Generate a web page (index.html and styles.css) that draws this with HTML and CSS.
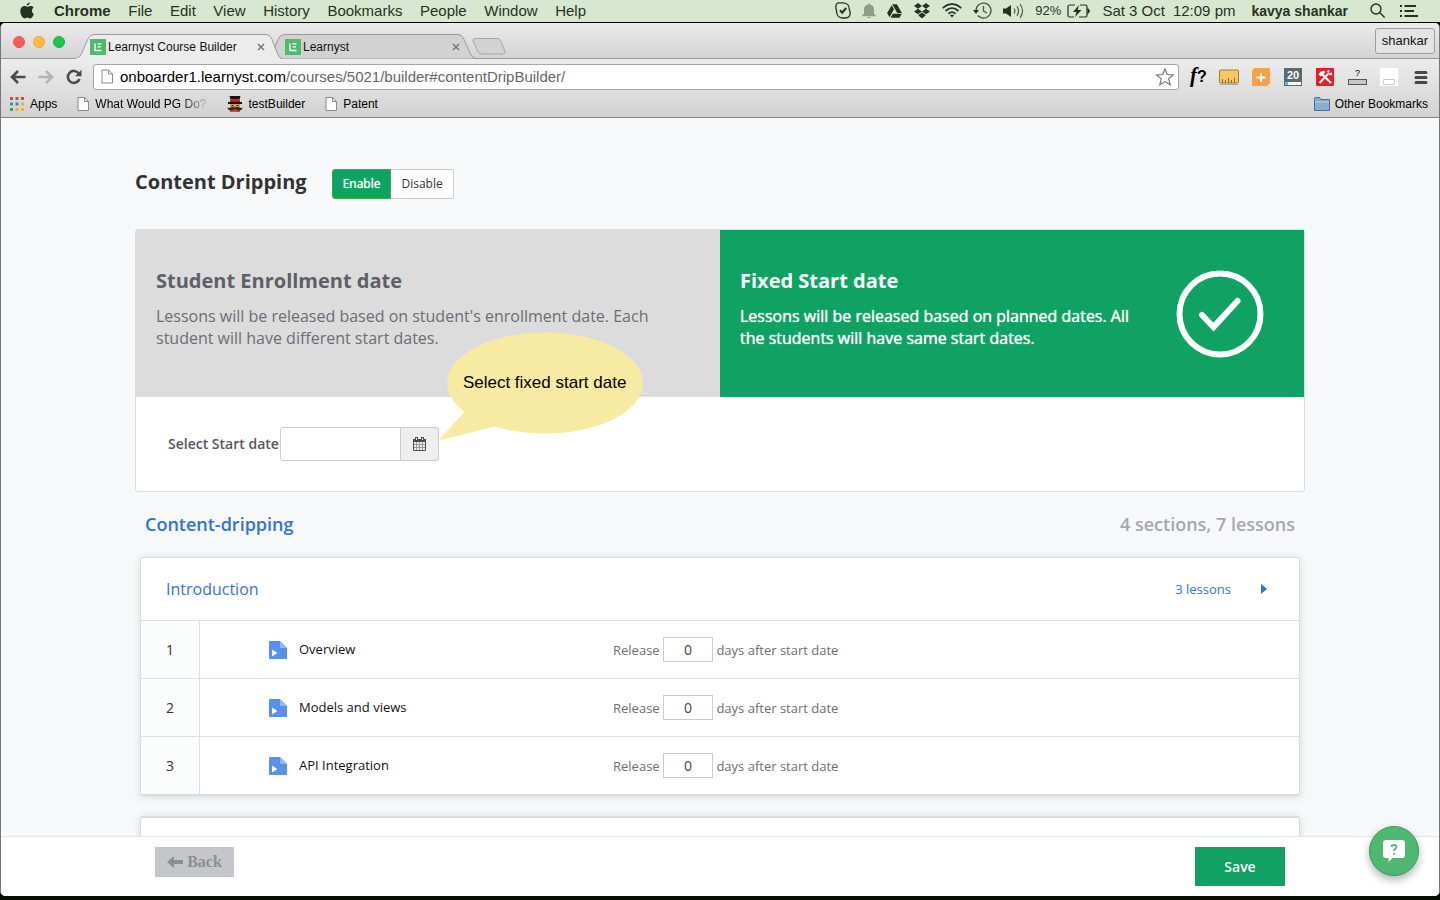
FILE: index.html
```html
<!DOCTYPE html>
<html lang="en">
<head>
<meta charset="utf-8">
<title>Learnyst Course Builder</title>
<link rel="stylesheet" href="styles.css">
</head>
<body>
<svg class="defs" aria-hidden="true">
  <symbol id="logo" viewBox="0 0 16 16"><rect width="16" height="16" fill="#4fb96f"/><path d="M5 4.500v7.000h6.500M7.500 4.800h4M7.500 7.900h3.500" stroke="#fff" stroke-width="1.300" fill="none"/></symbol>
  <symbol id="page" viewBox="0 0 12 14"><path d="M1 .5h6.500l4 4v9h-10.500z" fill="#fbfbfb" stroke="#8b8b8b"/><path d="M7.500 .5v4h4" fill="none" stroke="#8b8b8b"/></symbol>
  <symbol id="close" viewBox="0 0 8 8"><path d="M1 1l6 6M7 1l-6 6" stroke="#777" stroke-width="1.500"/></symbol>
  <symbol id="lesson" viewBox="0 0 18 18"><path d="M0 0h11l7 7v11H0z" fill="#5991ea"/><path d="M11 0l7 7h-7z" fill="#8fb9fb"/><path d="M3 8.500l5.500 3.500L3 15.500z" fill="#fff"/></symbol>
</svg>

<header class="menubar">
  <svg class="apple" width="14" height="17" viewBox="0 0 14 17" fill="#26311f"><path d="M9.800 .3c.1 1.800-1.400 3.500-3 3.400C6.600 2.100 8.100.5 9.800.3zM12 8.600c0-1.500.8-2.500 1.700-3.100-.9-1.300-2.200-1.600-3.100-1.600-1.400 0-2.300.8-3.200.8-.9 0-1.900-.7-3.100-.7C2 4.100.3 6 .3 9c0 3.500 2.400 7.400 4.300 7.400 1 0 1.500-.7 2.800-.7s1.700.7 2.800.7c1.600 0 2.900-2.300 3.600-4.200-1.100-.5-1.800-1.800-1.800-3.600z"/></svg>
  <nav class="menus">
    <strong>Chrome</strong><span>File</span><span>Edit</span><span>View</span><span>History</span><span>Bookmarks</span><span>People</span><span>Window</span><span>Help</span>
  </nav>
  <div class="status">
    <svg width="16" height="17" viewBox="0 0 16 17" fill="none" stroke="#26311f"><path d="M4 .8h4.500c3.500.2 5.800 3 5.800 6.400 0 1.200.9 2 .9 3.800 0 3-2 5-5 5H7.500C4 15.800 1.600 13 1.500 9.200 1.500 7.800.8 7 .8 4.600.8 2.400 2 .8 4 .8z" stroke-width="1.300"/><path d="M5 8.300l2.200 2.400 4-4.700" stroke-width="2"/></svg>
    <svg width="14" height="16" viewBox="0 0 14 16" fill="#8f9d88"><path d="M6 1.500a1 1 0 012 0c3 .5 4 2.500 4 5v4l1.800 2v.7H.2v-.7l1.800-2v-4c0-2.500 1-4.500 4-5zM5 14h4c-.5 1.500-3.500 1.500-4 0z"/></svg>
    <svg width="15" height="14" viewBox="0 0 15 14" fill="#26311f"><path d="M5.200.3h4.700l5 8.700h-4.700zM4.700 1.200L7 5.200 2.500 13.200.1 9.100zM5.800 9.800h9l-2.400 4H3.500z"/></svg>
    <svg width="18" height="16" viewBox="0 0 18 16" fill="#26311f"><path d="M5 0l4 3-4 2.700L1 3zM13 0l4 3-4 2.700L9 3zM5 5.700l4 2.800-4 2.800-4-2.800zM13 5.700l4 2.800-4 2.800-4-2.800zM9 9.400l3.800 2.900L9 15.500l-3.800-3.200z"/><path d="M9 3.500l3 2.200L9 8 6 5.700z" fill="#d8e8d0"/></svg>
    <svg width="20" height="15" viewBox="0 0 20 15" fill="none" stroke="#26311f" stroke-width="1.800"><path d="M.8 5.200C6-.3 14-.3 19.200 5.200M3.600 8C7.500 4.200 12.500 4.200 16.400 8M6.400 10.700c2.300-2 4.900-2 7.200 0"/><path d="M8 12.300c1.500-1 2.500-1 4 0l-2 2.200z" fill="#26311f" stroke="none"/></svg>
    <svg width="19" height="17" viewBox="0 0 19 17" fill="none" stroke="#4c5945" stroke-width="1.300"><path d="M3 8.500a7.500 7.500 0 111.800 5M10.500 4v5l3.500 2"/><path d="M0 8h6l-3 4z" fill="#26311f" stroke="none"/></svg>
    <svg width="21" height="16" viewBox="0 0 21 16" fill="none" stroke="#4c5945" stroke-width="1.200"><path d="M0 5.500h3L8 2v12l-5-3.500H0z" fill="#26311f" stroke="none"/><path d="M11 5.500q1.800 2.500 0 5M14 3.300q3 4.700 0 9.400M17 1q5 7 0 14"/></svg>
    <span class="battery">92%<svg width="23" height="14" viewBox="0 0 23 14" fill="none" stroke="#26311f" stroke-width="1.200"><path d="M8 1H2.500A1.500 1.500 0 001 2.500v9A1.500 1.500 0 002.500 13H7M13 1h5.500A1.500 1.500 0 0120 2.500v9a1.500 1.500 0 01-1.500 1.500H12"/><path d="M21 5q2.500 2 0 4z" fill="#26311f"/><path d="M12 1L6 8h3.500L8 13l6.500-7h-3.800z" fill="#26311f" stroke="none"/></svg></span>
  </div>
  <span class="clock"><span>Sat 3 Oct</span><span>12:09 pm</span></span>
  <strong class="user">kavya shankar</strong>
  <span class="tools">
    <svg width="15" height="15" viewBox="0 0 15 15" fill="none" stroke="#26311f" stroke-width="1.400"><circle cx="6" cy="6" r="5"/><path d="M9.600 9.600l5 5"/></svg>
    <svg width="18" height="12" viewBox="0 0 18 12" stroke="#26311f" stroke-width="1.800"><path d="M0 1h2M4.500 1H16M0 6h2M4.500 6H14M0 11h2M4.500 11H18"/></svg>
  </span>
</header>

<div class="window">
  <div class="tabstrip">
    <div class="lights"><i class="red"></i><i class="amber"></i><i class="green"></i></div>
    <div class="tab current">
      <svg class="shape" viewBox="0 0 206 26" preserveAspectRatio="none"><path d="M0 25.500C5 25 6 22 8 17l5-12Q15 .5 19 .5h172q4 0 6 5l5 14q2 6 5 6" fill="#ececec" stroke="#999"/><path d="M1 26h204" stroke="#ececec" stroke-width="2"/></svg>
      <svg width="16" height="16"><use href="#logo"/></svg><span>Learnyst Course Builder</span><button aria-label="Close tab"><svg width="8" height="8"><use href="#close"/></svg></button>
    </div>
    <div class="tab">
      <svg class="shape" viewBox="0 0 206 26" preserveAspectRatio="none"><path d="M9 25.500Q8 25 4 16l4-10Q10 .5 14 .5h174q4 0 6 5l6 14q2 6 6 6" fill="#d2d2d2" stroke="#999"/></svg>
      <svg width="16" height="16"><use href="#logo"/></svg><span>Learnyst</span><button aria-label="Close tab"><svg width="8" height="8"><use href="#close"/></svg></button>
    </div>
    <button class="newtab" aria-label="New tab"><svg width="34" height="17" viewBox="0 0 34 17"><path d="M3 .5h22q3 0 4 3l4 10q.5 2.500-2 2.500H10q-3 0-4-2.500L1 3Q.5.500 3 .5z" fill="#d3d3d3" stroke="#a5a5a5"/></svg></button>
    <button class="profile">shankar</button>
  </div>

  <div class="toolbar">
    <button aria-label="Back"><svg width="16" height="14" viewBox="0 0 16 14" fill="none" stroke="#4a4a4a" stroke-width="2.600"><path d="M15.500 7H2.500M8 1L2 7l6 6"/></svg></button>
    <button aria-label="Forward"><svg width="16" height="14" viewBox="0 0 16 14" fill="none" stroke="#b4b4b4" stroke-width="2.600"><path d="M.5 7h13M8 1l6 6-6 6"/></svg></button>
    <button aria-label="Reload"><svg width="16" height="16" viewBox="0 0 16 16" fill="none" stroke="#4a4a4a" stroke-width="2.600"><path d="M12.800 4.500A6 6 0 1013.500 10"/><path d="M15.500.8v6.400H9z" fill="#4a4a4a" stroke="none"/></svg></button>
    <div class="omnibox">
      <svg width="12" height="15"><use href="#page"/></svg>
      <div class="url" role="textbox" aria-label="Address" contenteditable="true" spellcheck="false">onboarder1.learnyst.com<span>/courses/5021/builder#contentDripBuilder/</span></div>
      <svg width="18" height="17" viewBox="0 0 18 17" fill="#fff" stroke="#777" stroke-width="1.200"><path d="M9 1l2.300 5.500 6 .5-4.600 3.900 1.500 5.800L9 13.600l-5.200 3.100 1.500-5.800L.7 7l6-.5z"/></svg>
    </div>
    <div class="extensions">
      <button aria-label="WhatFont"><svg width="20" height="20" viewBox="0 0 20 20"><text x="3" y="15" class="ext-serif">f</text><text x="10" y="15" class="ext-bold">?</text></svg></button>
      <button aria-label="Page Ruler"><svg width="20" height="20" viewBox="0 0 20 20"><rect x=".5" y="3" width="19" height="13" rx="1" fill="#f7c766" stroke="#a57a28"/><path d="M3.500 16v-4M6.500 16v-3M9.500 16v-5M12.500 16v-3M15.500 16v-5" stroke="#8d6a25"/><path d="M1 17.500h18" stroke="#aaa"/></svg></button>
      <button aria-label="Add"><svg width="20" height="20" viewBox="0 0 20 20"><path d="M3 1h16v15l-3 3H1V4z" fill="#f2a346"/><path d="M10 6v9M5.500 10.500h9" stroke="#fff" stroke-width="1.800"/></svg></button>
      <button aria-label="Page load"><svg width="20" height="20" viewBox="0 0 20 20"><path d="M1 1h18v18H1z" fill="#586b70"/><path d="M2 15h16v3H2z" fill="#fff"/><path d="M2 15h3v3H2z" fill="#54bddd"/><text x="4" y="12" class="ext-count">20</text></svg></button>
      <button aria-label="Developer tools"><svg width="20" height="20" viewBox="0 0 20 20"><rect x="1" y="1" width="18" height="18" rx="1" fill="#e41e26"/><path d="M4.500 16L13 7M7 7l9 9" stroke="#fff" stroke-width="2"/><path d="M3.500 7.500Q5 4 9 3.500L10.500 5 6 9.500zM12 4l1.500 3.500L17 8.500q.5-2-.5-3.500L14.500 6.500 13.500 5.500 15 3.500q-2-.5-3 .5z" fill="#fff"/></svg></button>
      <button aria-label="Unknown extension"><svg width="20" height="20" viewBox="0 0 20 20"><text x="8" y="9" class="ext-small">?</text><rect x="1.500" y="12.500" width="18" height="5" fill="#c6c6c6" stroke="#555"/></svg></button>
      <button aria-label="Blank extension"><svg width="20" height="20" viewBox="0 0 20 20"><path d="M1 1h18v18H1z" fill="#fff"/><path d="M4.500 12.500h11v5h-11z" fill="none" stroke="#ccc"/></svg></button>
      <button aria-label="Chrome menu"><svg width="20" height="20" viewBox="0 0 20 20" stroke="#484848" stroke-width="3" stroke-linecap="round"><path d="M5 5.500h10M5 10.500h10M5 15.500h10"/></svg></button>
    </div>
  </div>

  <div class="bookmarks">
    <a href="#"><svg width="14" height="14" viewBox="0 0 14 14"><path d="M0 0h3v3H0zM5.500 0h3v3h-3zM11 0h3v3h-3z" fill="#ee3e35"/><path d="M0 5.500h3v3H0zM0 11h3v3H0z" fill="#31a35a"/><path d="M5.500 5.500h3v3h-3z" fill="#3f7de8"/><path d="M11 5.500h3v3h-3zM5.500 11h3v3h-3zM11 11h3v3h-3z" fill="#f5ab34"/></svg>Apps</a>
    <a href="#"><svg width="12" height="14"><use href="#page"/></svg><span class="faded">What Would PG Do?</span></a>
    <a href="#"><svg width="16" height="16" viewBox="0 0 16 16"><path d="M3 13h10v3H3z" fill="#a85f31"/><path d="M3 7h10v6H3z" fill="#e0985a"/><path d="M2.500 0h11l-1 3.500h-9z" fill="#151010"/><path d="M3 3.500h10V6H3z" fill="#c8191e"/><path d="M1 6h14v2H1z" fill="#151010"/><path d="M4.500 9h2v1h-2zM9.500 9h2v1h-2z" fill="#222"/><path d="M.5 11q1 1.500 3 .5Q6 10 8 11.500q2-1.500 4.500 0 2 1 3-.5 0 3.500-3.500 3.500-2.500 0-4-1.500-1.500 1.500-4 1.500Q.5 14.500.5 11z" fill="#4b2412"/></svg>testBuilder</a>
    <a href="#"><svg width="12" height="14"><use href="#page"/></svg>Patent</a>
    <a href="#" class="other"><svg width="16" height="14" viewBox="0 0 16 14"><path d="M.5 13.500V1.500q0-1 1-1h4l1.500 2h8.500v11z" fill="#88add0" stroke="#456f94"/><path d="M1 5h14" stroke="#b8d1e6"/></svg>Other Bookmarks</a>
  </div>

  <main class="content">
    <div class="container">
      <div class="heading">
        <h1>Content Dripping</h1>
        <div class="toggle"><button class="on" aria-pressed="true">Enable</button><button aria-pressed="false">Disable</button></div>
      </div>

      <section class="card">
        <div class="options">
          <div class="option">
            <div><h2>Student Enrollment date</h2><p>Lessons will be released based on student's enrollment date. Each student will have different start dates.</p></div>
          </div>
          <div class="option selected">
            <div><h2>Fixed Start date</h2><p>Lessons will be released based on planned dates. All the students will have same start dates.</p></div>
            <svg class="tick" width="88" height="88" viewBox="0 0 88 88" fill="none" stroke="#fff" stroke-width="6"><circle cx="44" cy="44" r="40.500"/><path d="M26 45l11.500 12L61.500 31" stroke-linecap="round" stroke-linejoin="miter"/></svg>
          </div>
        </div>
        <form class="startdate">
          <label for="start">Select Start date</label>
          <div class="dategroup">
            <input id="start" type="text">
            <button type="button" aria-label="Open calendar"><svg width="13" height="14" viewBox="0 0 13 14" fill="none"><path d="M3.500 5v8M6.500 5v8M9.500 5v8M1 7.500h11M1 10.500h11" stroke="#999"/><path d="M.5 3.500h12v10H.5z" stroke="#4b4b4b"/><path d="M0 2h13v3H0z" fill="#4b4b4b"/><path d="M3.500 0v3.500M9.500 0v3.500" stroke="#4b4b4b" stroke-width="3"/><path d="M3.500 1v2M9.500 1v2" stroke="#eee"/></svg></button>
            <div class="bubble"><svg width="205" height="110" viewBox="0 0 205 110" fill="#f7eaa2"><ellipse cx="107" cy="51" rx="98" ry="50.500"/><path d="M0 109L30 76l36 16z"/></svg><span>Select fixed start date</span></div>
          </div>
        </form>
      </section>

      <div class="coursehead"><h3>Content-dripping</h3><span>4 sections, 7 lessons</span></div>

      <section class="panel">
        <div class="panelhead"><h4>Introduction</h4><a href="#">3 lessons<svg width="6" height="10" viewBox="0 0 6 10"><path d="M0 0l6 5-6 5z" fill="#2f6fd6"/></svg></a></div>
        <table>
          <tr><td class="num">1</td><td class="name"><svg width="18" height="18"><use href="#lesson"/></svg><span>Overview</span></td><td class="release"><label>Release <input type="text" value="0"> days after start date</label></td></tr>
          <tr><td class="num">2</td><td class="name"><svg width="18" height="18"><use href="#lesson"/></svg><span>Models and views</span></td><td class="release"><label>Release <input type="text" value="0"> days after start date</label></td></tr>
          <tr><td class="num">3</td><td class="name"><svg width="18" height="18"><use href="#lesson"/></svg><span>API Integration</span></td><td class="release"><label>Release <input type="text" value="0"> days after start date</label></td></tr>
        </table>
      </section>
      <section class="panel next"><div class="panelhead"></div></section>
    </div>
  </main>

  <footer class="actions">
    <div class="container">
      <button class="back"><svg width="16" height="12" viewBox="0 0 16 12"><path d="M7 0v4h9v4H7v4L0 6z" fill="#8b8e94"/></svg>Back</button>
      <button class="save">Save</button>
    </div>
    <button class="help" aria-label="Help"><svg width="22" height="22" viewBox="0 0 22 22"><path d="M3 0h16q3 0 3 3v12q0 3-3 3H9.500L5.500 22v-4H3q-3 0-3-3V3q0-3 3-3z" fill="#fff"/><path d="M8.500 7q0-2.200 2.500-2.200T13.500 7c0 1.800-2.500 1.800-2.500 4M11 12.700v2" fill="none" stroke="#4eb873" stroke-width="1.800"/></svg></button>
  </footer>
</div>
</body>
</html>
```

FILE: styles.css
```css
* { box-sizing: border-box; }
body {
  margin: 0;
  height: 100vh;
  display: flex;
  flex-direction: column;
  overflow: hidden;
  background: #080d05;
  font-family: "Open Sans", "Noto Sans", sans-serif;
  padding-bottom: 4px;
}
h1, h2, h3, h4, p { margin: 0; }
button, input { font: inherit; margin: 0; padding: 0; border: 0; background: none; color: inherit; }
a { color: inherit; text-decoration: none; }
svg { display: block; flex: none; overflow: visible; }
.defs { position: absolute; width: 0; height: 0; }

.menubar {
  flex: none;
  height: 23px;
  padding: 0 22px 1px 20px;
  display: flex;
  align-items: center;
  background: #d8e8d0;
  border-bottom: 1px solid #000;
  font: 15px/22px "Liberation Sans", Arial, sans-serif;
  color: #26311f;
  white-space: nowrap;
}
.menus { display: flex; justify-content: space-between; width: 532px; margin-left: 20px; }
.status { display: flex; align-items: center; gap: 11px; margin-left: auto; }
.battery { display: flex; align-items: center; gap: 6px; font-size: 13px; }
.clock { display: flex; gap: 8px; margin-left: 12px; }
.user { margin-left: 16px; font-size: 14px; }
.tools { display: flex; align-items: center; gap: 15px; margin-left: 22px; }

.window {
  flex: 1;
  min-height: 0;
  display: flex;
  flex-direction: column;
  border: 1px solid #77777a;
  border-top: 0;
  border-bottom: 0;
  border-radius: 5px;
  overflow: hidden;
  background: #fff;
}
.tabstrip {
  flex: none;
  height: 36px;
  display: flex;
  align-items: flex-end;
  padding-right: 4px;
  background: linear-gradient(#ebebeb, #d4d4d4);
  border-bottom: 1px solid #999;
  font: 12px/16px "Liberation Sans", Arial, sans-serif;
  color: #111;
}
.lights { display: flex; gap: 8px; width: 77px; padding: 0 0 10px 12px; }
.lights i { width: 12px; height: 12px; border-radius: 50%; border: 1px solid transparent; }
.lights .red { background: #fc5b57; border-color: #ec5550; }
.lights .amber { background: #fdbc40; border-color: #eaa93a; }
.lights .green { background: #1cc64a; border-color: #18b540; }
.tab { position: relative; width: 195px; height: 25px; display: flex; align-items: center; gap: 2px; padding: 0 4px 0 12px; margin-bottom: -1px; }
.current { z-index: 1; }
.tab > * { position: relative; }
.tab .shape { position: absolute; inset: 0 -8px 0 -3px; width: 206px; height: 25px; }
.tab button { margin-left: auto; padding: 4px; }
.newtab { margin: 0 auto 3px 4px; }
.profile {
  align-self: center;
  height: 26px;
  padding: 0 6px;
  font-size: 13px;
  border: 1px solid #9c9c9c;
  border-radius: 3px;
  background: #e4e4e4;
}
.toolbar {
  flex: none;
  display: flex;
  align-items: center;
  gap: 12px;
  padding: 3px 8px 0 9px;
  height: 32px;
  background: linear-gradient(#ececec, #dedede);
}
.omnibox {
  flex: 1;
  height: 26px;
  display: flex;
  align-items: center;
  gap: 7px;
  padding: 0 4px 0 7px;
  margin-left: -1px;
  background: #fff;
  border: 1px solid #a6a6a6;
  border-radius: 3px;
  font: 15px/22px "Liberation Sans", Arial, sans-serif;
  color: #000;
}
.url { flex: 1; }
.url span { color: #666; }
.extensions { display: flex; gap: 12px; margin-left: -4px; }
.ext-serif { font: italic bold 21px "Liberation Serif", serif; }
.ext-bold { font: bold 16px "Liberation Sans", sans-serif; }
.ext-count { font: bold 11px "Liberation Sans", sans-serif; fill: #fff; }
.ext-small { font: 9px "Liberation Sans", sans-serif; }
.bookmarks {
  flex: none;
  display: flex;
  align-items: center;
  gap: 20px;
  height: 27px;
  padding: 0 11px 0 9px;
  background: linear-gradient(#dedede, #d2d2d2);
  border-bottom: 1px solid #858585;
  font: 12px/16px "Liberation Sans", Arial, sans-serif;
  color: #000;
}
.bookmarks a { display: flex; align-items: center; gap: 6px; }
.bookmarks .other { margin-left: auto; gap: 5px; }
.faded { background: linear-gradient(90deg, #000 75%, #bbb); background-clip: text; color: transparent; }

.content { flex: 1; min-height: 0; overflow: hidden; background: #f7f8fa; }
.container { max-width: 1170px; margin: 0 auto; }
.heading { display: flex; align-items: center; gap: 25px; padding: 51px 0 30px; }
.heading h1 { font-size: 20px; line-height: 26px; font-weight: 700; color: #333; padding-bottom: 4px; }
.toggle { display: flex; height: 30px; font-size: 12px; color: #333; }
.toggle button { padding: 0 10px 2px; background: #fff; border: 1px solid #ccc; border-left: 0; border-radius: 0 3px 3px 0; }
.toggle .on { background: #10a263; border: 1px solid #3aaa4c; border-radius: 3px 0 0 3px; color: #fff; text-shadow: 0 0 1px #fff; }

.card { background: #fff; border: 1px solid #dcdddf; border-radius: 3px; }
.options { display: grid; grid-template-columns: 1fr 1fr; }
.option { display: flex; align-items: flex-start; gap: 40px; padding: 36px 40px 48px 20px; background: #dcdcdc; color: #6b6e76; }
.option h2 { font-size: 20px; line-height: 30px; font-weight: 700; color: #5d6068; margin-bottom: 9px; }
.option p { font-size: 16px; line-height: 22px; }
.option > div { flex: 1; }
.selected { background: #10a263; color: #fff; padding-bottom: 36px; }
.selected h2 { color: #fff; }
.selected p { text-shadow: 0 0 1px #fff; }
.tick { align-self: center; }
.startdate { display: flex; align-items: center; gap: 1px; padding: 30px 32px; font-size: 14px; font-weight: 600; color: #55585f; }
.startdate label { padding-bottom: 2px; }
.dategroup { position: relative; display: flex; height: 34px; }
.dategroup input { width: 121px; padding: 0 8px; border: 1px solid #ccc; border-radius: 3px 0 0 3px; background: #fff; }
.dategroup button { width: 38px; display: flex; align-items: center; justify-content: center; border: 1px solid #ccc; border-left: 0; border-radius: 0 3px 3px 0; background: #eee; }
.bubble { position: absolute; left: 158px; bottom: 19px; }
.bubble span { position: absolute; left: 25px; top: 41px; font: 17px/20px "Liberation Sans", Arial, sans-serif; color: #000; white-space: nowrap; }

.coursehead { display: flex; justify-content: space-between; padding: 20px 10px; font-size: 18px; line-height: 25px; font-weight: 600; color: #a5a8ac; }
.coursehead h3 { font-size: 18px; font-weight: 600; color: #3371d8; }
.panel { margin: 0 5px 20px; background: #fff; border: 1px solid #dadbdd; border-bottom-width: 2px; border-radius: 3px; box-shadow: 0 1px 8px rgba(0, 0, 0, .12); }
.panel.next { border-top-width: 2px; }
.panelhead { display: flex; align-items: center; justify-content: space-between; height: 62px; padding: 0 32px 0 25px; color: #3a70d6; }
.panelhead h4 { font-size: 16px; font-weight: 400; }
.panelhead a { display: flex; align-items: center; gap: 30px; font-size: 13px; }
table { width: 100%; border-collapse: separate; border-spacing: 0; table-layout: fixed; }
td { height: 58px; padding: 0; border-top: 1px solid #dedfe1; font-size: 13px; }
.num { width: 59px; border-right: 1px solid #dedfe1; background: #fbfdfc; text-align: center; font-size: 14px; color: #333; }
.name { width: 413px; padding-left: 69px; color: #111; }
.name svg { display: inline-block; vertical-align: middle; margin-right: 12px; }
.release { color: #6b6e76; }
.release input { width: 50px; height: 25px; border: 1px solid #ccc; background: #fff; text-align: center; font-size: 14px; color: #444; }

.actions { position: relative; flex: none; background: #fff; border-top: 1px solid #e6e6e6; height: 60px; padding-top: 10px; }
.actions .container { display: flex; justify-content: space-between; align-items: flex-start; padding: 0 20px; }
.back { display: flex; align-items: center; justify-content: center; gap: 4px; width: 79px; height: 30px; background: #c5c6ca; color: #8b8e94; font: bold 16px "Liberation Serif", serif; }
.save { width: 90px; height: 39px; background: #10a263; color: #fff; font-size: 14px; font-weight: 600; }
.help { position: absolute; right: 20px; top: -11px; width: 50px; height: 50px; border: 1px solid #379c59; border-radius: 50%; background: #4eb873; box-shadow: 0 4px 8px rgba(0, 0, 0, .3); display: flex; align-items: center; justify-content: center; }
```
